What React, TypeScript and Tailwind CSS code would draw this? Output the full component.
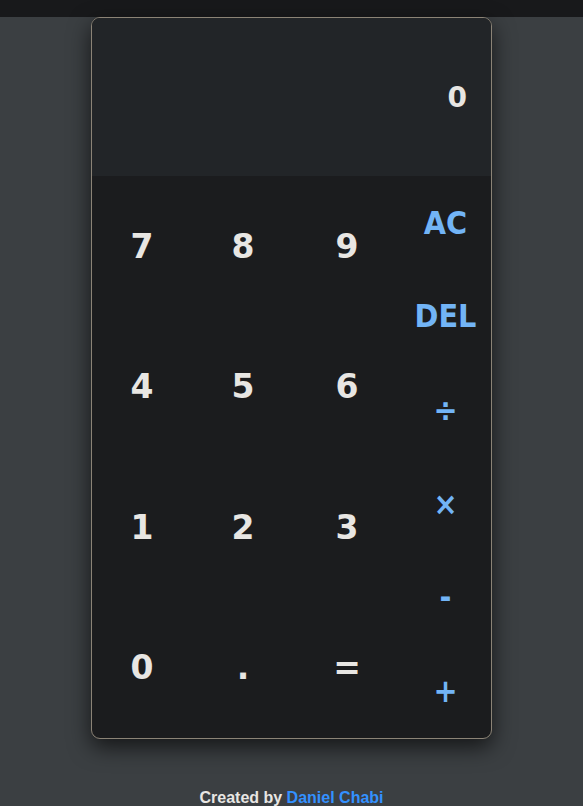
import React from "react";

const digits = [
  ["7", "8", "9"],
  ["4", "5", "6"],
  ["1", "2", "3"],
  ["0", ".", "="],
];

const ops = ["AC", "DEL", "÷", "×", "-", "+"];

export default function App() {
  return (
    <div className="min-h-[806px] bg-[#3b3f42] font-['Liberation_Sans',Arial,sans-serif]">
      <div className="h-[17px] bg-[#18191b]" />
      <div className="mx-auto w-[401px] overflow-hidden rounded-[9px] border border-[#8b8376] bg-[#1b1c1e] shadow-[0_8px_22px_rgba(0,0,0,0.65)]">
        <div className="flex h-[158px] items-center justify-end bg-[#222528] pr-[24px] pt-[2px] font-['DejaVu_Sans',Verdana,sans-serif] text-[28px] font-bold text-[#e8e6e3]">
          0
        </div>
        <div className="grid h-[562px] grid-cols-[100px_102px_106px_1fr] font-bold">
          <div className="col-span-3 grid grid-cols-[100px_102px_106px] grid-rows-4 font-['DejaVu_Sans',Verdana,sans-serif]">
            {digits.flat().map((d) => (
              <button key={d} type="button" className="flex items-center justify-center text-[33px] text-[#e8e6e3]">
                {d}
              </button>
            ))}
          </div>
          <div className="grid grid-rows-6 font-['DejaVu_Sans_Condensed','DejaVu_Sans',Verdana,sans-serif]">
            {ops.map((o) => (
              <button key={o} type="button" className="flex items-center justify-center text-[32px] text-[#72b4f6]">
                {o}
              </button>
            ))}
          </div>
        </div>
      </div>
      <p className="mt-[47px] text-center text-[16px] font-bold text-[#e8e6e3]">
        Created by <a className="text-[#3391ff]">Daniel Chabi</a>
      </p>
    </div>
  );
}
